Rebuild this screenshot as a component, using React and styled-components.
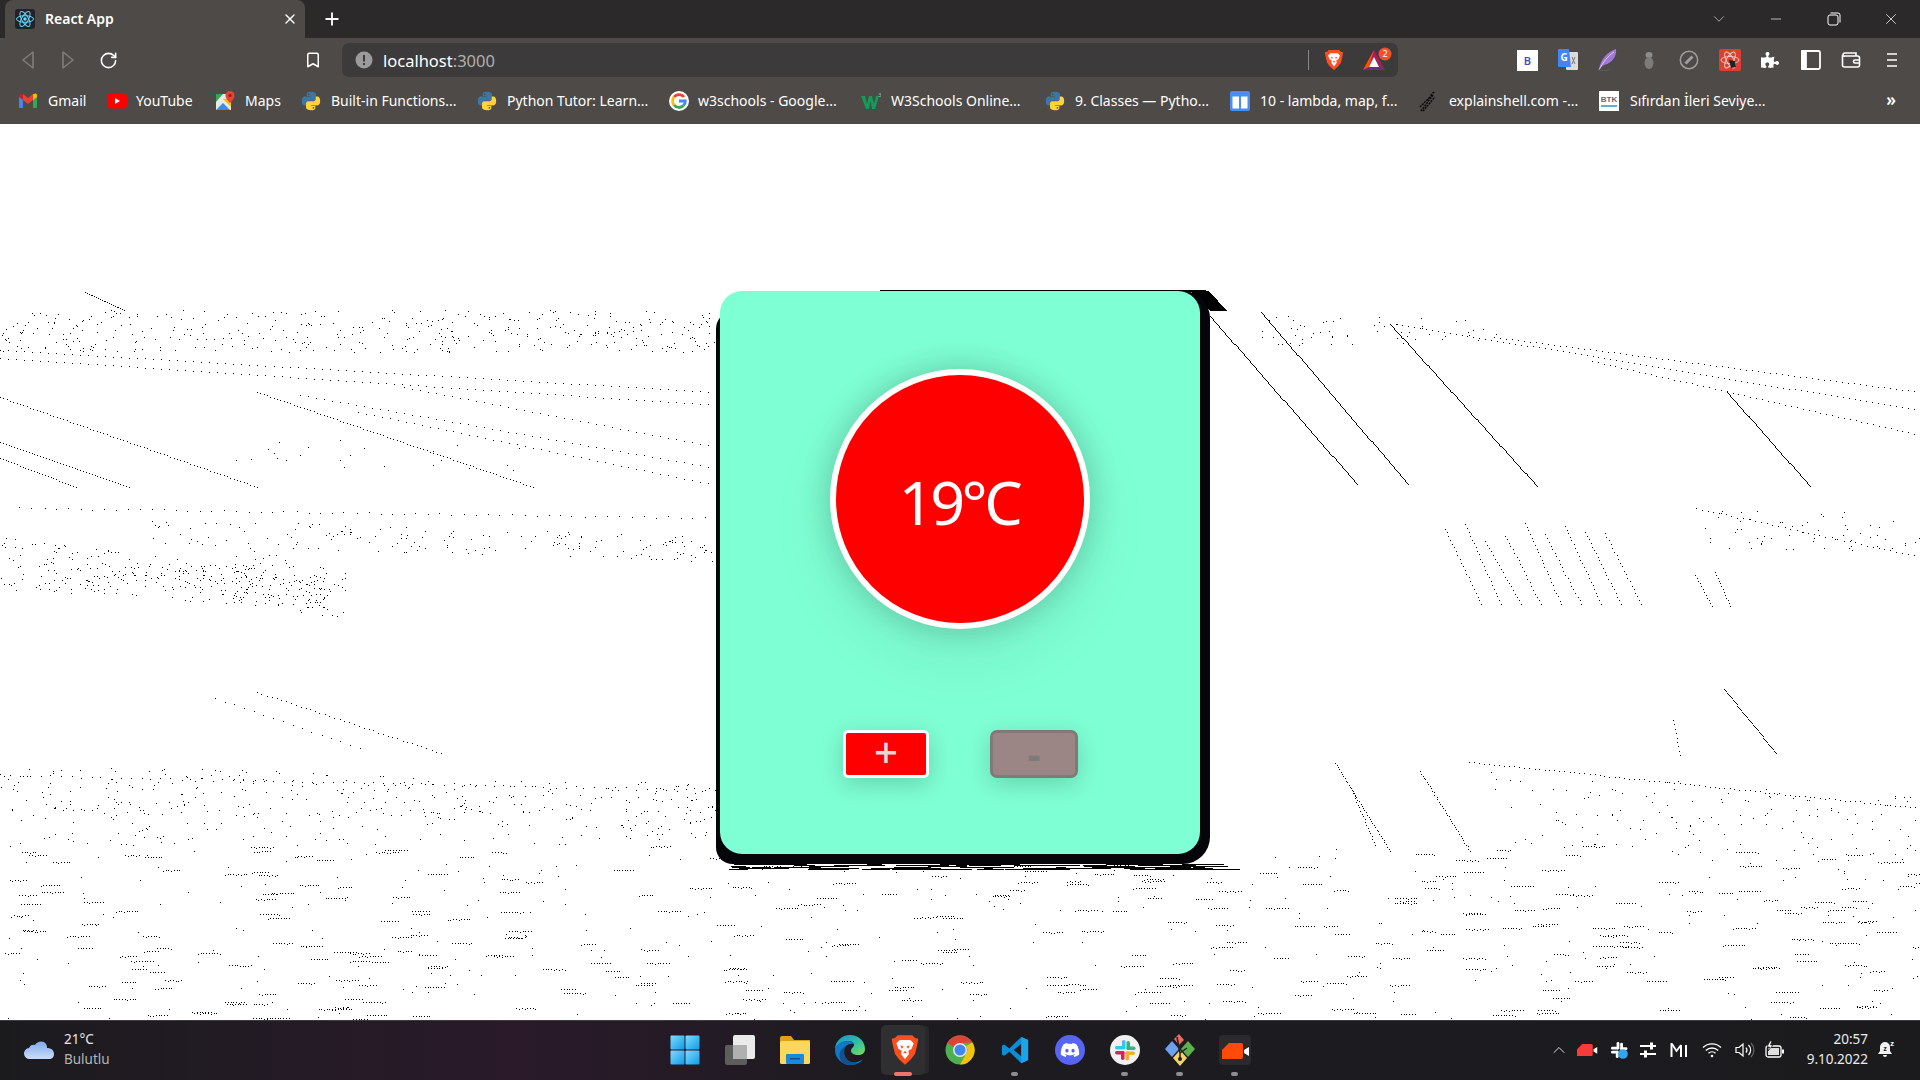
import React, { useMemo } from "react";
import styled, { createGlobalStyle } from "styled-components";
import { Plus, X, ChevronDown, ChevronUp, Minus, RotateCw, Bookmark } from "lucide-react";
import { FaDiscord, FaPuzzlePiece } from "react-icons/fa";

const GlobalStyle = createGlobalStyle`
  html, body { margin: 0; padding: 0; background: #fff; }
  body { font-family: "Noto Sans", "Open Sans", sans-serif; width: 1920px; height: 1080px; overflow: hidden; }
  * { box-sizing: border-box; }
`;

const Screen = styled.div`
  width: 1920px;
  height: 1080px;
  display: flex;
  flex-direction: column;
`;

/* browser chrome */
const TabStrip = styled.div`
  height: 38px;
  background: #2b2929;
  display: flex;
  align-items: flex-end;
  padding-left: 5px;
  color: #fff;
`;
const Tab = styled.div`
  width: 300px;
  height: 38px;
  background: #4d4a48;
  border-radius: 8px 8px 0 0;
  display: flex;
  align-items: center;
  padding: 0 7px 0 10px;
  font-size: 14px;
  font-weight: 600;
  gap: 10px;
`;
const TabTitle = styled.span`
  flex: 1;
  margin-top: -2px;
`;
const NewTab = styled.div`
  width: 54px;
  height: 38px;
  display: flex;
  align-items: center;
  justify-content: center;
`;
const WindowControls = styled.div`
  margin-left: auto;
  display: flex;
  height: 38px;
  align-items: center;
  padding-right: 0;
`;
const WindowButton = styled.div`
  width: 57.5px;
  display: flex;
  justify-content: center;
  align-items: center;
  color: ${(p) => p.$dim ? "#d0cecd" : "#fff"};
`;
const Toolbar = styled.div`
  height: 44px;
  background: #4d4a48;
  display: flex;
  align-items: center;
  padding-left: 8px;
  color: #fff;
`;
const ToolSlot = styled.div`
  width: ${(p) => p.$w || 40}px;
  margin-left: ${(p) => p.$ml || 0}px;
  height: 32px;
  flex: none;
  display: flex;
  align-items: center;
  justify-content: center;
`;
const UrlBox = styled.div`
  width: 1056px;
  height: 34px;
  margin-left: 9px;
  margin-right: 109px;
  background: #3d3a3c;
  border-radius: 7px;
  display: flex;
  align-items: center;
  padding-left: 13px;
  font-size: 16.5px;
  color: #fff;
`;
const UrlText = styled.span`
  margin-left: 10px;
  flex: 1;
  span { color: #b1afae; }
`;
const UrlDivider = styled.div`
  width: 1px;
  height: 20px;
  background: #8a8889;
  margin-right: 13px;
`;
const BTile = styled.span`
  width: 21px;
  height: 21px;
  background: #fff;
  color: #3f51b5;
  font-size: 11px;
  font-weight: 600;
  display: flex;
  align-items: center;
  justify-content: center;
`;
const BookmarkBar = styled.div`
  height: 42px;
  background: #4d4a48;
  display: flex;
  align-items: center;
  padding: 0 0 5px 19px;
  color: #fff;
  font-size: 14px;
`;
const BookmarkItem = styled.div`
  width: ${(p) => p.$w}px;
  flex: none;
  display: flex;
  align-items: center;
  gap: ${(p) => p.$gap || 11}px;
  white-space: nowrap;
`;
const More = styled.div`
  margin-left: auto;
  margin-right: 24px;
  font-size: 17px;
  font-weight: 600;
  margin-top: -3px;
`;

/* page */
const Page = styled.main`
  position: relative;
  height: 896px;
  background: #fff;
  display: flex;
  flex-direction: column;
  align-items: center;
  padding-top: 167px;
`;
const Dither = styled.svg`
  position: absolute;
  inset: 0;
`;
const Card = styled.section`
  position: relative;
  width: 480px;
  height: 563px;
  background: #7fffd4;
  border-radius: 22px;
  box-shadow: 5px 5px 0 5px #05050a, -9.5px 15.5px 0 -5.5px #05050a;
  display: flex;
  flex-direction: column;
  align-items: center;
  padding-top: 78px;
`;
const Display = styled.div`
  width: 260px;
  height: 260px;
  border-radius: 50%;
  background: #f00;
  border: 6px solid #fff;
  box-shadow: 0 0 32px rgba(0, 0, 0, 0.2), 0 25px 70px rgba(0, 0, 0, 0.07);
  color: #fff;
  display: flex;
  align-items: center;
  justify-content: center;
  font-size: 61px;
  letter-spacing: -3.5px;
  padding: 4px 2px 0 0;
`;
const Controls = styled.div`
  margin-top: 101px;
  display: flex;
  gap: 61px;
  margin-left: 1px;
`;
const StepButton = styled.button`
  width: ${(p) => p.disabled ? 88 : 86}px;
  height: 48px;
  padding: 0;
  font-family: inherit;
  font-size: ${(p) => p.disabled ? 40 : 42}px;
  font-weight: ${(p) => p.disabled ? 800 : 500};
  line-height: 1;
  border-radius: ${(p) => p.disabled ? 7 : 5}px;
  border: ${(p) => p.disabled ? "3px solid #7f7a7a" : "3px solid #fff"};
  background: ${(p) => p.disabled ? "#9c8585" : "#f00"};
  color: ${(p) => p.disabled ? "#7f7a7a" : "#dcdcdc"};
  box-shadow: 0 6px 24px rgba(0, 0, 0, 0.18);
  display: flex;
  align-items: center;
  justify-content: center;
  span { margin-top: ${(p) => p.disabled ? 0 : -5}px; }
`;

/* taskbar */
const Taskbar = styled.footer`
  height: 60px;
  flex: none;
  border-top: 1px solid #3c3c3e;
  background: linear-gradient(90deg, #1b1b1e 0%, #2a1a2a 27%, #1d1b20 45%, #1b1b1e 100%);
  display: flex;
  color: #fff;
`;
const Weather = styled.div`
  width: 657px;
  flex: none;
  display: flex;
  align-items: center;
  padding: 0 0 3px 24px;
  gap: 9px;
`;
const WeatherText = styled.div`
  font-size: 13.5px;
  line-height: 20px;
  color: #e8e8e8;
  small { display: block; font-size: 13.5px; color: #b4b4b4; }
`;
const Pinned = styled.div`
  display: flex;
  flex: none;
`;
const PinnedSlot = styled.div`
  position: relative;
  width: 55px;
  height: 59px;
  display: flex;
  align-items: center;
  justify-content: center;
  padding-bottom: 2px;
  ${(p) => p.$active && `
    &::before {
      content: "";
      position: absolute;
      left: 4px; right: 7px; top: 4px; bottom: 5px;
      background: #2f2e31;
      border-radius: 5px;
      box-shadow: 5px 0 0 -1px #28272a;
    }
  `}
  svg { position: relative; }
`;
const RunDot = styled.span`
  position: absolute;
  bottom: 4px;
  left: 50%;
  width: ${(p) => p.$active ? 18 : 7}px;
  height: 4px;
  margin-left: ${(p) => p.$active ? -11 : -4}px;
  border-radius: 2px;
  background: ${(p) => p.$active ? "#ee7567" : "#8e8e90"};
`;
const Tray = styled.div`
  flex: 1;
  display: flex;
  align-items: center;
  padding: 0 0 3px 282px;
`;
const TraySlot = styled.div`
  width: ${(p) => p.$w || 30}px;
  flex: none;
  display: flex;
  align-items: center;
  justify-content: center;
  margin-top: 2px;
`;
const Clock = styled.div`
  width: 78px;
  text-align: right;
  font-size: 13.5px;
  line-height: 20px;
  color: #ececec;
`;
const BellSlot = styled.div`
  margin-left: 10px;
  display: flex;
`;

/* icons */
const ReactFavicon = () => (
  <svg width="20" height="20" viewBox="0 0 20 20">
    <rect width="20" height="20" rx="3" fill="#20232a" />
    <g fill="none" stroke="#61dafb" strokeWidth="1">
      <ellipse cx="10" cy="10" rx="8.5" ry="3.3" />
      <ellipse cx="10" cy="10" rx="8.5" ry="3.3" transform="rotate(60 10 10)" />
      <ellipse cx="10" cy="10" rx="8.5" ry="3.3" transform="rotate(120 10 10)" />
    </g>
    <circle cx="10" cy="10" r="1.7" fill="#61dafb" />
  </svg>
);
const NavArrow = ({ flip }) => (
  <svg width="14" height="20" viewBox="0 0 14 20" fill="none" stroke="#807d7c" strokeWidth="1.6" strokeLinejoin="round">
    <path d={flip ? "M2 2v16l10-8z" : "M12 2v16L2 10z"} />
  </svg>
);
const RestoreIcon = () => (
  <svg width="14" height="14" viewBox="0 0 14 14" fill="none" stroke="#fff" strokeWidth="1">
    <rect x="1" y="3" width="10" height="10" rx="2" />
    <path d="M3.5 1H11a2 2 0 0 1 2 2v7.5" />
  </svg>
);
const InfoIcon = () => (
  <svg width="18" height="18" viewBox="0 0 18 18">
    <circle cx="9" cy="9" r="8.5" fill="#9c9a9b" />
    <rect x="8" y="4" width="2" height="6.5" fill="#3d3a3c" />
    <rect x="8" y="12" width="2" height="2" fill="#3d3a3c" />
  </svg>
);
const BraveIcon = ({ size = 20 }) => (
  <svg width={size} height={size} viewBox="0 0 24 24">
    <path d="M6.500 1h11l2 2 2.500 .5-.5 3L21 9l-1.500 6-3 4L12 23l-4.500-4-3-4L3 9l-.5-2.500L2 3.500 4.500 3z" fill="#fb4f1f" />
    <path d="M8 4.500h8l2.500 2.500-1.500 4-2.500 1.500.5 2.500L12 19l-3-4 .5-2.500L7 11 5.500 7z" fill="#fff" />
    <path d="M8.500 8.500l2.500 1-1.500 1.500zM15.500 8.500l-2.500 1 1.500 1.500zM12 12.500l-1.500 2h3z" fill="#fb4f1f" />
  </svg>
);
const BatIcon = () => (
  <svg width="30" height="26" viewBox="0 0 30 26">
    <path d="M11 3 22 23H0z" fill="#9e1f63" />
    <path d="M11 3 0 23l6-3z" fill="#ff5000" />
    <path d="M22 23H0l6-3h10z" fill="#662d91" />
    <path d="M11 10l5 10H6z" fill="#fff" />
    <circle cx="22" cy="7" r="6.500" fill="#fb4f1f" />
    <text x="22" y="10" textAnchor="middle" fontSize="9" fill="#fff" fontFamily="Noto Sans">2</text>
  </svg>
);
const TranslateIcon = () => (
  <svg width="20" height="22" viewBox="0 0 20 22">
    <rect x="8" y="3" width="12" height="18" rx="1" fill="#dcdcdc" />
    <path d="M14 8l3 7M17 8l-3 7" stroke="#777" strokeWidth="1" />
    <path d="M1 0h10l2 18H1a1 1 0 0 1-1-1V1a1 1 0 0 1 1-1z" fill="#4285f4" />
    <text x="6" y="12" textAnchor="middle" fontSize="10" fontWeight="700" fill="#fff" fontFamily="Noto Sans">G</text>
  </svg>
);
const FeatherIcon = () => (
  <svg width="20" height="22" viewBox="0 0 20 22">
    <path d="M1 20C3 10 9 3 18 0c1 6-3 14-12 16z" fill="#a178d8" />
    <path d="M1 21C5 13 10 7 16 3" stroke="#dcd0f0" strokeWidth="1" fill="none" />
    <path d="M1 21c4 1 8 1 11-1" stroke="#5d5857" strokeWidth="1.500" fill="none" />
  </svg>
);
const GrayBugIcon = () => (
  <svg width="14" height="22" viewBox="0 0 14 22">
    <ellipse cx="7" cy="6" rx="3.500" ry="3" fill="#8d8b8a" />
    <ellipse cx="7" cy="14" rx="4.500" ry="6" fill="#7d7b7a" />
  </svg>
);
const CompassIcon = () => (
  <svg width="20" height="20" viewBox="0 0 20 20" fill="none" stroke="#a09e9d">
    <circle cx="10" cy="10" r="8.700" strokeWidth="1.500" />
    <path d="M6.500 13.500l7-7" strokeWidth="3" />
  </svg>
);
const ReactDevIcon = () => (
  <svg width="22" height="22" viewBox="0 0 22 22">
    <rect width="22" height="22" rx="2" fill="#d8412f" />
    <g fill="none" stroke="#f3c6bf" strokeWidth="1">
      <ellipse cx="11" cy="11" rx="9" ry="3.500" />
      <ellipse cx="11" cy="11" rx="9" ry="3.500" transform="rotate(60 11 11)" />
      <ellipse cx="11" cy="11" rx="9" ry="3.500" transform="rotate(120 11 11)" />
    </g>
    <path d="M10 11l6 1 1 6-5 1z" fill="#222" />
  </svg>
);
const PanelIcon = () => (
  <svg width="20" height="20" viewBox="0 0 20 20" fill="none" stroke="#fff" strokeWidth="1.800">
    <rect x="1" y="1" width="18" height="18" rx="1.500" />
    <rect x="1" y="1" width="4" height="18" fill="#fff" />
  </svg>
);
const WalletIcon = () => (
  <svg width="20" height="20" viewBox="0 0 20 20" fill="none" stroke="#fff" strokeWidth="1.600">
    <path d="M2 5a2 2 0 0 1 2-2h11v3M1.500 5v10a2 2 0 0 0 2 2h13a2 2 0 0 0 2-2V8a2 2 0 0 0-2-2H4a2 2 0 0 1-2.500-1z" />
    <path d="M18 10h-4a1.500 1.500 0 0 0 0 3h4" />
  </svg>
);
const MenuIcon = () => (
  <svg width="14" height="16" viewBox="0 0 14 16" stroke="#fff" strokeWidth="1.600">
    <path d="M2 2h10M2 8h10M2 14h10" />
  </svg>
);
const GmailIcon = () => (
  <svg width="18" height="16" viewBox="0 0 18 16">
    <path d="M0 14V3l4 3v9H1a1 1 0 0 1-1-1z" fill="#4285f4" />
    <path d="M18 14V3l-4 3v9h3a1 1 0 0 0 1-1z" fill="#34a853" />
    <path d="M14 1v6l4-3V2c0-1.500-2-2-3-1z" fill="#fbbc04" />
    <path d="M4 7V1L9 5l5-4v6L9 11z" fill="#ea4335" />
    <path d="M0 4V2c0-1.500 2-2 3-1l1 .5V7z" fill="#c5221f" />
  </svg>
);
const YoutubeIcon = () => (
  <svg width="20" height="16" viewBox="0 0 20 16">
    <rect width="20" height="15" y="0.500" rx="4" fill="#f00" />
    <path d="M8 5l5 3-5 3z" fill="#fff" />
  </svg>
);
const MapsIcon = () => (
  <svg width="19" height="20" viewBox="0 0 19 20">
    <rect y="3" width="15" height="16" fill="#e8e8e8" />
    <path d="M0 3h7l-7 8z" fill="#34a853" />
    <path d="M0 19l7-7 7 7z" fill="#4285f4" />
    <path d="M7 8l8 8V8z" fill="#fbbc04" />
    <path d="M14 0a4.500 4.500 0 0 1 4.500 4.500C18.500 8 14 12 14 12S9.500 8 9.500 4.500A4.500 4.500 0 0 1 14 0z" fill="#ea4335" />
    <circle cx="14" cy="4.500" r="1.600" fill="#8a1f15" />
  </svg>
);
const PYTHON_PATH = "M12 2C7 2 7.300 4.200 7.300 4.200v2.300H12v.7H5.400S2 6.800 2 12s3 5 3 5h1.800v-2.400s-.1-3 2.900-3h4.900s2.800 0 2.800-2.700V4.700S17 2 12 2zM9.300 3.600a.9.9 0 1 1 0 1.800.9.9 0 0 1 0-1.800z";
const PythonIcon = () => (
  <svg width="22" height="22" viewBox="0 0 24 24">
    <path d={PYTHON_PATH} fill="#3a77a8" />
    <path d={PYTHON_PATH} fill="#ffd43b" transform="rotate(180 12 12)" />
  </svg>
);
const GoogleIcon = () => (
  <svg width="20" height="20" viewBox="0 0 20 20">
    <circle cx="10" cy="10" r="10" fill="#fff" />
    <g fill="none" strokeWidth="2.800">
      <path d="M15 6A6.300 6.300 0 0 0 5 6" stroke="#ea4335" />
      <path d="M5 6a6.300 6.300 0 0 0 0 8" stroke="#fbbc04" />
      <path d="M5 14a6.300 6.300 0 0 0 9.500 .6" stroke="#34a853" />
      <path d="M14.500 14.600A6.300 6.300 0 0 0 16.300 10H10" stroke="#4285f4" />
    </g>
  </svg>
);
const W3Icon = () => (
  <svg width="20" height="18" viewBox="0 0 20 18">
    <path d="M0 4h4l2 8 2-8h3l2 8 2-8h3l-4 13h-3L9.500 9 8 17H5z" fill="#0f9d58" />
    <text x="17" y="5" fontSize="6" fill="#8dc6a4" fontFamily="Noto Sans">3</text>
  </svg>
);
const TableIcon = () => (
  <svg width="20" height="20" viewBox="0 0 20 20">
    <rect width="20" height="20" rx="2" fill="#4d8cf0" />
    <rect x="2.500" y="5.500" width="6.500" height="12" fill="#fff" />
    <rect x="11" y="5.500" width="6.500" height="12" fill="#fff" />
  </svg>
);
const ShellIcon = () => (
  <svg width="18" height="22" viewBox="0 0 18 22" fill="none" stroke="#0a0a0a" strokeWidth="1.500" strokeDasharray="2 1">
    <path d="M2 21L14 5M4 21L16 7M1 17L12 6M12 6c1-3 3-4 4-4" />
  </svg>
);
const BtkIcon = () => (
  <svg width="20" height="20" viewBox="0 0 20 20">
    <rect width="20" height="20" fill="#fff" />
    <text x="10" y="11" textAnchor="middle" fontSize="8" fontWeight="700" fill="#666" fontFamily="Liberation Sans">BTK</text>
    <rect x="2" y="14" width="16" height="2" fill="#6ca7d8" />
  </svg>
);
const WindowsIcon = () => (
  <svg width="30" height="30" viewBox="0 0 30 30">
    <defs>
      <linearGradient id="win" x1="0" y1="0" x2="1" y2="1">
        <stop offset="0" stopColor="#7fdcff" />
        <stop offset="1" stopColor="#0f9be6" />
      </linearGradient>
    </defs>
    <rect x="0.500" y="0.500" width="14" height="14" rx="1" fill="url(#win)" />
    <rect x="15.500" y="0.500" width="14" height="14" rx="1" fill="url(#win)" />
    <rect x="0.500" y="15.500" width="14" height="14" rx="1" fill="url(#win)" />
    <rect x="15.500" y="15.500" width="14" height="14" rx="1" fill="url(#win)" />
  </svg>
);
const TaskViewIcon = () => (
  <svg width="30" height="30" viewBox="0 0 30 30">
    <rect x="0" y="10" width="22" height="20" rx="2" fill="#5d5d5d" />
    <rect x="8" y="0" width="22" height="24" rx="2" fill="#eaeaea" />
    <rect x="8" y="10" width="14" height="14" fill="#b0b0b0" />
  </svg>
);
const FolderIcon = () => (
  <svg width="30" height="28" viewBox="0 0 30 28">
    <path d="M0 2a2 2 0 0 1 2-2h9l3 4h16v6H0z" fill="#d9a514" />
    <rect y="5" width="30" height="23" rx="1.500" fill="#fbd75b" />
    <rect x="6" y="18" width="18" height="10" rx="1" fill="#1e88d8" />
    <rect x="10" y="22" width="10" height="1.500" fill="#0d4f8f" />
  </svg>
);
const EdgeIcon = () => (
  <svg width="30" height="30" viewBox="0 0 30 30">
    <defs>
      <linearGradient id="edgeTop" x1="0" y1="0" x2="1" y2="1">
        <stop offset="0" stopColor="#1592cf" />
        <stop offset="0.55" stopColor="#2fc0a0" />
        <stop offset="1" stopColor="#7fdd58" />
      </linearGradient>
    </defs>
    <path d="M15 0c8 0 15 6 15 14 0 4-3 6-7 6-4 0-7-2-7-4 0-3 3-4 3-6 0-3-3-4-6-4C7 6 1 10 0 15 0 6 7 0 15 0z" fill="url(#edgeTop)" />
    <path d="M0 15C1 9 7 6 13 6c3 0 5 1 6 3-7-1-12 4-10 11 1 5 7 9 13 7 2-.5 4-1.500 6-3-3 4-8 6-13 6C7 30 0 23 0 15z" fill="#0f79c7" />
    <path d="M11 11c-3 5-2 11 3 15 3 2 6 2.500 9 1.500-2 1.500-5 2.500-8 2.500-5 0-10-3-10.500-9C4 17 7 13 11 11z" fill="#12508f" />
  </svg>
);
const ChromeIcon = () => (
  <svg width="30" height="30" viewBox="0 0 30 30">
    <circle cx="15" cy="15" r="14.500" fill="#4caf50" />
    <path d="M2.500 7.500A14.500 14.500 0 0 1 27.500 7.500L15 8a7 7 0 0 0-6.500 4z" fill="#db4437" />
    <path d="M27.500 7.500A14.500 14.500 0 0 1 15 29.500L21 19a7 7 0 0 0 0-8z" fill="#f4c20d" />
    <circle cx="15" cy="15" r="7" fill="#e8e8e8" />
    <circle cx="15" cy="15" r="5.500" fill="#4285f4" />
  </svg>
);
const VscodeIcon = () => (
  <svg width="30" height="30" viewBox="0 0 24 24">
    <path d="M17 1.500 7.500 10.700 3.300 7.500 1.500 8.500v7l1.800 1 4.200-3.200L17 22.500l5.500-2.500V4zM17 7v10l-6-5z" fill="#0d8dd8" />
    <path d="M17 1.500V22.500l5.500-2.500V4z" fill="#1fa3e8" />
  </svg>
);
const DiscordBadge = styled.span`
  width: 30px;
  height: 30px;
  border-radius: 50%;
  background: #5865f2;
  color: #fff;
  display: flex;
  align-items: center;
  justify-content: center;
  position: relative;
`;
const SlackIcon = ({ size = 30, tile = true }) => (
  <svg width={size} height={size} viewBox="0 0 30 30">
    {tile && <circle cx="15" cy="15" r="15" fill="#f1f1f1" />}
    <rect x="12" y="5" width="3.500" height="9.500" rx="1.700" fill={tile ? "#36c5f0" : "#fff"} />
    <rect x="5" y="11" width="9" height="3.500" rx="1.700" fill={tile ? "#36c5f0" : "#fff"} />
    <rect x="16.500" y="6" width="3.500" height="9" rx="1.700" fill={tile ? "#2eb67d" : "#fff"} />
    <rect x="16.500" y="11.500" width="9" height="3.500" rx="1.700" fill={tile ? "#2eb67d" : "#fff"} />
    <rect x="5" y="16" width="9.500" height="3.500" rx="1.700" fill={tile ? "#e01e5a" : "#fff"} />
    <rect x="11" y="16" width="3.500" height="9" rx="1.700" fill={tile ? "#e01e5a" : "#fff"} />
    {tile ? (
      <>
        <rect x="15.500" y="16.500" width="9.500" height="3.500" rx="1.700" fill="#ecb22e" />
        <rect x="15.500" y="16.500" width="3.500" height="9" rx="1.700" fill="#ecb22e" />
      </>
    ) : (
      <circle cx="20" cy="20" r="6" fill="#2ea8f0" />
    )}
  </svg>
);
const GitIcon = () => (
  <svg width="32" height="32" viewBox="0 0 32 32">
    <path d="M1 15l7-8 7 8-7 8z" fill="#6ea0f0" />
    <path d="M10 5l5-5 5 6-5 5z" fill="#e86c60" />
    <path d="M17 15l7-8 7 8-7 8z" fill="#5bb14a" />
    <path d="M9 24l7-8 7 8-7 8z" fill="#f2d46a" />
    <path d="M13 3l3 16 7-5M16 19v5" stroke="#222" strokeWidth="1.500" fill="none" />
    <circle cx="16" cy="25" r="2" fill="#222" />
  </svg>
);
const CamIcon = ({ width = 32, body = "#ff4a0a", tile = true, lens = "#fff" }) => (
  <svg width={width} height={tile ? 30 : 18} viewBox={tile ? "0 0 32 30" : "0 0 32 18"}>
    {tile && <rect width="32" height="30" rx="4" fill="#2a2a2c" />}
    <g transform={tile ? "translate(3 7)" : "translate(0 0)"}>
      <path d="M0 8L7 1h12a2 2 0 0 1 2 2v12a2 2 0 0 1-2 2H0z" fill={body} />
      <path d="M22 8l5-3v9l-5-3z" fill={lens} />
    </g>
  </svg>
);
const CloudIcon = () => (
  <svg width="31" height="21" viewBox="0 0 31 21">
    <defs>
      <linearGradient id="cloud" x1="0" y1="0" x2="0" y2="1">
        <stop offset="0" stopColor="#7fa9ea" />
        <stop offset="1" stopColor="#c9defb" />
      </linearGradient>
    </defs>
    <path d="M6 20a5.500 5.500 0 0 1-1-11c1-3 4-4 6-3 2-4 9-5 11-1 1 1 1 3 1 4 4 0 7 2 7 6 0 3-2 5-5 5z" fill="url(#cloud)" />
  </svg>
);
const SwitchIcon = () => (
  <svg width="18" height="16" viewBox="0 0 18 16" stroke="#fff" strokeWidth="2" fill="#fff">
    <path d="M0 4h16M0 12h16" />
    <rect x="10" y="0.500" width="3" height="7" stroke="none" />
    <rect x="4" y="8.500" width="3" height="7" stroke="none" />
  </svg>
);
const MIcon = () => (
  <svg width="18" height="14" viewBox="0 0 18 14" stroke="#fff" fill="none">
    <path d="M1.500 14V0M16 14V2M11 14V2" strokeWidth="2" />
    <path d="M2 1l4.500 7L11 2" strokeWidth="1.800" />
  </svg>
);
const WifiIcon = () => (
  <svg width="20" height="16" viewBox="0 0 20 16" fill="none" stroke="#fff" strokeWidth="1.300">
    <path d="M1 5.500a13 13 0 0 1 18 0M3.800 8.500a9 9 0 0 1 12.400 0M6.500 11.300a5 5 0 0 1 7 0" />
    <circle cx="10" cy="14" r="1.300" fill="#fff" stroke="none" />
  </svg>
);
const VolumeIcon = () => (
  <svg width="20" height="16" viewBox="0 0 20 16" fill="none" stroke="#fff" strokeWidth="1.200">
    <path d="M1 5.500h3L8 2v12L4 10.500H1z" />
    <path d="M11 5.500a4 4 0 0 1 0 5M13.500 3a7 7 0 0 1 0 10" />
    <path d="M16 1a10 10 0 0 1 0 14" stroke="#666" />
  </svg>
);
const BatteryIcon = () => (
  <svg width="20" height="18" viewBox="0 0 20 18">
    <rect x="1" y="5" width="15" height="11" rx="2" fill="none" stroke="#fff" strokeWidth="1.300" />
    <rect x="3" y="7" width="11" height="7" fill="#ddd" />
    <rect x="17" y="8.500" width="2" height="4" fill="#fff" />
    <path d="M5 0L2 6h2.500L3 10l5-6H5.500L7 0z" fill="#fff" stroke="#1b1b1e" strokeWidth="0.700" />
  </svg>
);
const NotifyIcon = () => (
  <svg width="18" height="20" viewBox="0 0 18 20">
    <path d="M7 3a5 5 0 0 1 5 5v4l2 3H0l2-3V8a5 5 0 0 1 5-5z" fill="#f0f0f0" />
    <path d="M5 16h4a2 2 0 0 1-4 0z" fill="#f0f0f0" />
    <text x="7" y="12" textAnchor="middle" fontSize="6.500" fontWeight="700" fill="#1b1b1e" fontFamily="Noto Sans">z</text>
    <text x="14" y="7" textAnchor="middle" fontSize="7.500" fontWeight="700" fill="#f0f0f0" fontFamily="Noto Sans">z</text>
  </svg>
);

/* thresholded wallpaper: short dotted runs and diagonal traces */
function buildDither() {
  let seed = 20221009;
  const rnd = () => {
    seed |= 0;
    seed = (seed + 0x6d2b79f5) | 0;
    let t = Math.imul(seed ^ (seed >>> 15), 1 | seed);
    t = (t + Math.imul(t ^ (t >>> 7), 61 | t)) ^ t;
    return ((t ^ (t >>> 14)) >>> 0) / 4294967296;
  };
  const parts = [];
  const dot = (x, y) => parts.push(`M${Math.round(x)} ${Math.round(y)}h1v1h-1z`);
  const line = (x1, y1, x2, y2, step = 4, jitter = 0) => {
    const len = Math.hypot(x2 - x1, y2 - y1);
    const n = Math.floor(len / step);
    for (let i = 0; i <= n; i++) {
      const f = i / n;
      dot(x1 + (x2 - x1) * f + (rnd() - 0.5) * jitter, y1 + (y2 - y1) * f + (rnd() - 0.5) * jitter);
    }
  };
  const scatter = (x0, x1, y0, y1, count, slope = 0) => {
    for (let i = 0; i < count; i++) {
      const x = x0 + rnd() * (x1 - x0);
      dot(x, y0 + rnd() * (y1 - y0) + (x - x0) * slope);
    }
  };
  const runs = (x0, x1, y0, y1, count) => {
    for (let i = 0; i < count; i++) {
      const x = x0 + rnd() * (x1 - x0);
      const y = y0 + rnd() * (y1 - y0);
      const n = 6 + Math.floor(rnd() * 4);
      for (let j = 0; j < n; j++) dot(x + j * 2.7, y + (rnd() > 0.85 ? 1 : 0));
    }
  };

  // left, upper
  line(85, 292, 124, 310, 2);
  scatter(0, 716, 310, 352, 420);
  line(0, 350, 716, 392, 8);
  line(0, 358, 716, 405, 8);
  line(0, 397, 257, 487, 3.5);
  line(0, 442, 129, 487, 3);
  line(0, 458, 76, 487, 3);
  line(257, 392, 533, 487, 3.5);
  line(404, 387, 716, 447, 8);
  line(358, 412, 716, 485, 8);
  line(300, 395, 716, 468, 8);
  scatter(230, 520, 440, 470, 24);
  line(20, 508, 716, 518, 12, 2);
  scatter(150, 716, 518, 545, 170, 0.03);
  scatter(0, 330, 537, 565, 200, 0.12);
  scatter(0, 330, 565, 590, 120, 0.06);
  scatter(230, 350, 545, 605, 70, 0.15);
  // left, lower
  line(257, 692, 441, 753, 5, 1);
  line(215, 698, 360, 748, 10, 1);
  scatter(0, 716, 762, 810, 300, 0.03);
  line(0, 775, 716, 790, 10, 3);
  scatter(0, 716, 810, 845, 120);
  // right, upper
  line(1210, 316, 1357, 484, 1.3);
  line(1261, 312, 1408, 484, 1.3);
  line(1390, 324, 1537, 486, 1.3);
  line(1727, 392, 1810, 486, 1.3);
  line(1396, 324, 1920, 410, 6);
  line(1494, 337, 1920, 392, 6);
  line(1592, 361, 1920, 435, 6);
  line(1696, 508, 1920, 557, 6, 1);
  scatter(1700, 1920, 510, 550, 60);
  scatter(1260, 1500, 316, 345, 60);
  for (let x = 1445; x < 1610; x += 20) {
    line(x, 512 + rnd() * 30, x + 36, 604, 4, 1);
  }
  line(1695, 575, 1712, 606, 3);
  line(1715, 572, 1730, 606, 3);
  // right, lower
  line(1335, 763, 1390, 851, 2.5, 1);
  line(1352, 790, 1375, 845, 3, 1);
  line(1420, 771, 1470, 851, 2.5, 1);
  line(1724, 689, 1776, 753, 1.5);
  line(1673, 720, 1680, 755, 4);
  line(1469, 762, 1920, 808, 5, 1);
  scatter(1480, 1920, 770, 845, 140, 0.05);
  // bottom
  runs(0, 1920, 845, 1020, 340);
  scatter(0, 1920, 845, 1020, 380);

  const solid = [];
  // top rim and flare of the card shadow
  solid.push("M880 290h326v1.500h-326z");
  solid.push("M1190 291h19l18 20h-16z");
  // bottom flare
  for (let i = 0; i < 120; i++) {
    const x = 720 + rnd() * 490;
    const w = 8 + rnd() * 34;
    solid.push(`M${x.toFixed(0)} ${864 + Math.floor(rnd() * 6)}h${w.toFixed(0)}v1h-${w.toFixed(0)}z`);
  }
  solid.push("M1160 869h70v1h-70z");
  return { dots: parts.join(""), solid: solid.join("") };
}

const bookmarks = [
  { label: "Gmail", icon: <GmailIcon />, w: 88, gap: 11 },
  { label: "YouTube", icon: <YoutubeIcon />, w: 109, gap: 9 },
  { label: "Maps", icon: <MapsIcon />, w: 84, gap: 10 },
  { label: "Built-in Functions...", icon: <PythonIcon />, w: 176, gap: 9 },
  { label: "Python Tutor: Learn...", icon: <PythonIcon />, w: 193, gap: 9 },
  { label: "w3schools - Google...", icon: <GoogleIcon />, w: 192, gap: 9 },
  { label: "W3Schools Online...", icon: <W3Icon />, w: 183, gap: 10 },
  { label: "9. Classes — Pytho...", icon: <PythonIcon />, w: 186, gap: 9 },
  { label: "10 - lambda, map, f...", icon: <TableIcon />, w: 189, gap: 10 },
  { label: "explainshell.com -...", icon: <ShellIcon />, w: 180, gap: 12 },
  { label: "Sıfırdan İleri Seviye...", icon: <BtkIcon />, w: 220, gap: 11 },
];

const pinned = [
  { key: "win", icon: <WindowsIcon /> },
  { key: "view", icon: <TaskViewIcon /> },
  { key: "files", icon: <FolderIcon /> },
  { key: "edge", icon: <EdgeIcon /> },
  { key: "brave", icon: <BraveIcon size={32} />, run: true, active: true },
  { key: "chrome", icon: <ChromeIcon /> },
  { key: "vscode", icon: <VscodeIcon />, run: true },
  { key: "discord", icon: <DiscordBadge><FaDiscord size={20} /></DiscordBadge> },
  { key: "slack", icon: <SlackIcon />, run: true },
  { key: "git", icon: <GitIcon />, run: true },
  { key: "cam", icon: <CamIcon />, run: true },
];

export default function App() {
  const dither = useMemo(buildDither, []);

  return (
    <Screen>
      <GlobalStyle />
      <TabStrip>
        <Tab>
          <ReactFavicon />
          <TabTitle>React App</TabTitle>
          <X size={16} strokeWidth={2} />
        </Tab>
        <NewTab><Plus size={20} strokeWidth={2.2} /></NewTab>
        <WindowControls>
          <WindowButton $dim><ChevronDown size={18} strokeWidth={1} /></WindowButton>
          <WindowButton><Minus size={16} strokeWidth={1} /></WindowButton>
          <WindowButton><RestoreIcon /></WindowButton>
          <WindowButton><X size={18} strokeWidth={1} /></WindowButton>
        </WindowControls>
      </TabStrip>
      <Toolbar>
        <ToolSlot><NavArrow /></ToolSlot>
        <ToolSlot><NavArrow flip /></ToolSlot>
        <ToolSlot><RotateCw size={19} strokeWidth={2} /></ToolSlot>
        <ToolSlot $ml={165}><Bookmark size={18} strokeWidth={2} /></ToolSlot>
        <UrlBox>
          <InfoIcon />
          <UrlText>localhost<span>:3000</span></UrlText>
          <UrlDivider />
          <ToolSlot $w={24}><BraveIcon size={22} /></ToolSlot>
          <ToolSlot $w={40} $ml={12}><BatIcon /></ToolSlot>
        </UrlBox>
        <ToolSlot $w={40.5}>
          <BTile>B</BTile>
        </ToolSlot>
        <ToolSlot $w={40.5}><TranslateIcon /></ToolSlot>
        <ToolSlot $w={40.5}><FeatherIcon /></ToolSlot>
        <ToolSlot $w={40.5}><GrayBugIcon /></ToolSlot>
        <ToolSlot $w={40.5}><CompassIcon /></ToolSlot>
        <ToolSlot $w={40.5}><ReactDevIcon /></ToolSlot>
        <ToolSlot $w={40.5}><FaPuzzlePiece size={18} /></ToolSlot>
        <ToolSlot $w={40.5}><PanelIcon /></ToolSlot>
        <ToolSlot $w={40.5}><WalletIcon /></ToolSlot>
        <ToolSlot $w={40.5}><MenuIcon /></ToolSlot>
      </Toolbar>
      <BookmarkBar>
        {bookmarks.map((b) => (
          <BookmarkItem key={b.label} $w={b.w} $gap={b.gap}>
            {b.icon}
            <span>{b.label}</span>
          </BookmarkItem>
        ))}
        <More>»</More>
      </BookmarkBar>

      <Page>
        <Dither width="1920" height="896" viewBox="0 124 1920 896" aria-hidden="true">
          <path d={dither.dots} fill="#000" shapeRendering="crispEdges" />
          <path d={dither.solid} fill="#000" shapeRendering="crispEdges" />
        </Dither>
        <Card>
          <Display>19°C</Display>
          <Controls>
            <StepButton type="button"><span>+</span></StepButton>
            <StepButton type="button" disabled><span>-</span></StepButton>
          </Controls>
        </Card>
      </Page>

      <Taskbar>
        <Weather>
          <CloudIcon />
          <WeatherText>
            21°C
            <small>Bulutlu</small>
          </WeatherText>
        </Weather>
        <Pinned>
          {pinned.map((p) => (
            <PinnedSlot key={p.key} $active={p.active}>
              {p.icon}
              {p.run && <RunDot $active={p.active} />}
            </PinnedSlot>
          ))}
        </Pinned>
        <Tray>
          <TraySlot><ChevronUp size={20} strokeWidth={1.2} color="#ddd" /></TraySlot>
          <TraySlot><CamIcon width={24} body="#f63b3b" tile={false} /></TraySlot>
          <TraySlot><SlackIcon size={24} tile={false} /></TraySlot>
          <TraySlot><SwitchIcon /></TraySlot>
          <TraySlot $w={30}><MIcon /></TraySlot>
          <TraySlot $w={36}><WifiIcon /></TraySlot>
          <TraySlot><VolumeIcon /></TraySlot>
          <TraySlot><BatteryIcon /></TraySlot>
          <Clock>
            20:57
            <br />
            9.10.2022
          </Clock>
          <BellSlot><NotifyIcon /></BellSlot>
        </Tray>
      </Taskbar>
    </Screen>
  );
}
